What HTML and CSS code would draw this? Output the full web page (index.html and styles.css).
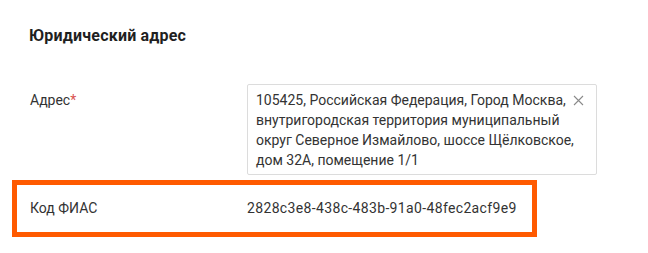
FILE: index.html
```html
<!DOCTYPE html>
<html lang="ru">
<head>
<meta charset="utf-8">
<link rel="stylesheet" href="styles.css">
</head>
<body>
<div class="section">
  <h2 class="title">Юридический адрес</h2>
  <div class="row row-address">
    <div class="label">Адрес<span class="req">*</span></div>
    <div class="field">
      <div class="field-text">105425, Российская Федерация, Город Москва, внутригородская территория муниципальный округ Северное Измайлово, шоссе Щёлковское, дом 32А, помещение 1/1</div>
      <button class="clear" aria-label="Очистить">
        <svg width="11" height="11" viewBox="0 0 11 11"><path d="M1 1L10 10M10 1L1 10" stroke="#8a8a8a" stroke-width="1.1" fill="none"/></svg>
      </button>
    </div>
  </div>
  <div class="highlight">
    <div class="row row-fias">
      <div class="label label-fias">Код ФИАС</div>
      <div class="value">2828c3e8-438c-483b-91a0-48fec2acf9e9</div>
    </div>
  </div>
</div>
</body>
</html>
```

FILE: styles.css
```css
* { box-sizing: border-box; }
html, body { margin: 0; padding: 0; background: #fff; }
body {
  font-family: Roboto, "Noto Sans", Arial, sans-serif;
  color: #333;
  font-size: 14px;
  line-height: 20px;
  width: 648px;
  height: 253px;
  overflow: hidden;
}
.section { padding-top: 26px; }
.title {
  margin: 0 0 38px 29px;
  font-size: 16px;
  line-height: 20px;
  font-weight: 700;
  letter-spacing: 0.2px;
  color: #1f1f1f;
}
.row { display: flex; align-items: flex-start; }
.row-address { padding-left: 30px; }
.label { width: 217px; flex: none; color: #333; }
.row-address .label { padding-top: 6px; }
.req { color: #d9534f; }
.field {
  position: relative;
  width: 350px;
  border: 1px solid #dcdcdc;
  border-radius: 2px;
  padding: 5px 22px 4px 8px;
}
.field-text { color: #333; }
.clear {
  position: absolute;
  top: 10px;
  right: 12px;
  width: 11px;
  height: 11px;
  padding: 0;
  border: 0;
  background: none;
  display: flex;
}
.highlight {
  margin: 5px 0 0 12px;
  width: 525px;
  height: 57px;
  border: 5px solid #ff5a00;
  padding: 13px 0 0 13px;
}
.value { color: #333; white-space: nowrap; letter-spacing: 0.35px; }
```
